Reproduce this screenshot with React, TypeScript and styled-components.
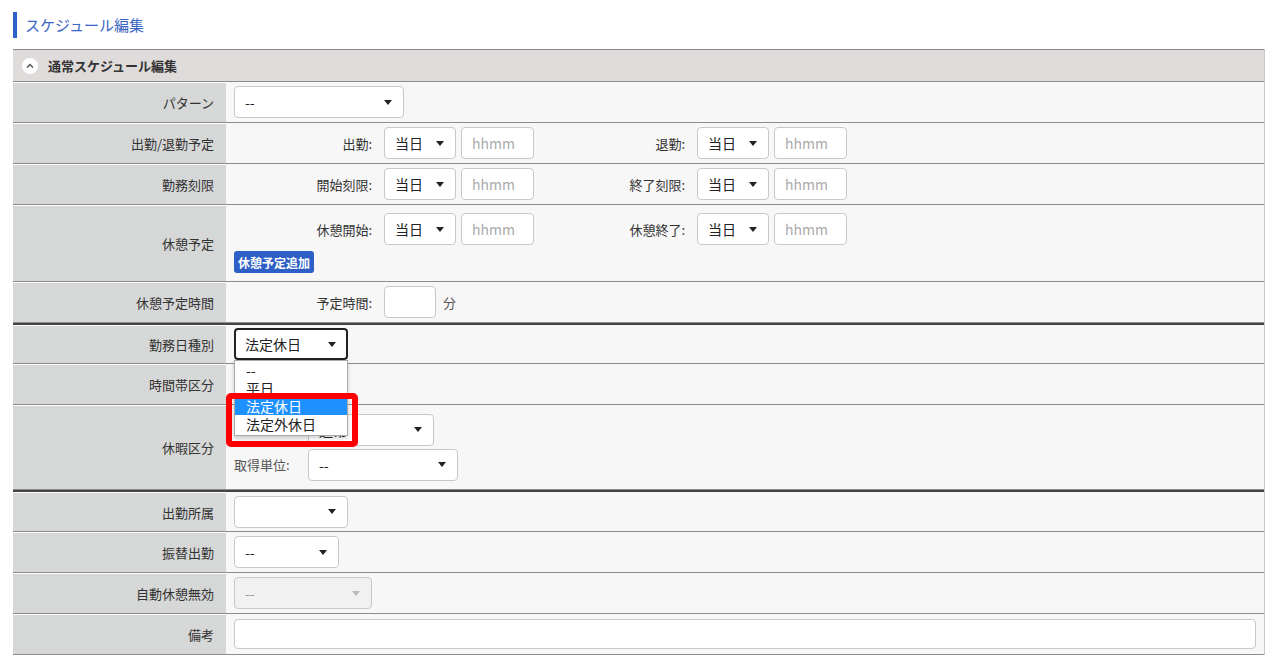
import React from "react";
import styled, { createGlobalStyle } from "styled-components";

const Global = createGlobalStyle`
  body { margin: 0; background: #fff; font-family: "Noto Sans CJK JP", "Noto Sans", sans-serif; font-size: 13px; color: #333; }
  * { box-sizing: border-box; }
`;

const Page = styled.div`
  padding: 12px 15px 16px 13px;
  position: relative;
`;
const Title = styled.h1`
  margin: 0 0 11px;
  border-left: 4px solid #2f62c9;
  padding-left: 8px;
  height: 26px;
  line-height: 26px;
  font-size: 15px;
  font-weight: normal;
  color: #3a66c4;
`;
const Section = styled.div`
  border-right: 1px solid #c8c8c8;
`;
const Header = styled.div`
  display: flex;
  align-items: center;
  gap: 10px;
  height: 33px;
  background: #dedbda;
  border-top: 1px solid #8c8c8c;
  border-bottom: 1px solid #8c8c8c;
  padding-left: 9px;
  font-weight: bold;
  font-size: 13px;
  color: #333;
`;
const Toggle = styled.span`
  width: 16px; height: 16px; border-radius: 50%; background: #fff;
  display: inline-flex; align-items: center; justify-content: center;
`;
const Row = styled.div<{ $h: number; $thick?: boolean }>`
  display: grid;
  grid-template-columns: 213px 1fr;
  height: ${p => p.$h}px;
  border-top: ${p => (p.$thick ? "2px solid #444" : "none")};
  border-bottom: 1px solid #8c8c8c;
`;
const Label = styled.div`
  background: #d6d7d7;
  display: flex; align-items: center; justify-content: flex-end;
  padding-right: 12px;
  color: #333;
  border-top: 1px solid #fff;
`;
const Value = styled.div`
  background: #f7f7f7;
  padding: 0 8px;
  display: flex; flex-direction: column; justify-content: center; gap: 3px;
  position: relative;
`;
const TimeLine = styled.div`
  display: grid;
  grid-template-columns: 150px 72px 78px 163px 72px 78px;
  align-items: center;
`;
const GLabel = styled.span`
  text-align: right; padding-right: 12px;
`;
const Sel = styled.div<{ $w: number; $focus?: boolean; $disabled?: boolean }>`
  width: ${p => p.$w}px; height: 32px; flex-shrink: 0;
  border: ${p => (p.$focus ? "2px solid #222" : "1px solid #c8c8c8")};
  border-radius: 4px;
  background: ${p => (p.$disabled ? "#f1f1f1" : "#fff")};
  color: ${p => (p.$disabled ? "#999" : "#222")};
  display: flex; align-items: center; justify-content: space-between;
  padding: 0 ${p => (p.$focus ? 10 : 11)}px 0 ${p => (p.$focus ? 9 : 10)}px;
  font-size: 14px;
  &::after { content: ""; border-left: 4px solid transparent; border-right: 4px solid transparent;
    border-top: 5px solid ${p => (p.$disabled ? "#bbb" : "#222")}; }
`;
const TimeInput = styled.div<{ $gap?: number }>`
  width: 73px; height: 32px; margin-left: ${p => p.$gap ?? 5}px;
  border: 1px solid #c8c8c8; border-radius: 4px; background: #fff;
  color: #aaa; font-size: 14px; display: flex; align-items: center; padding-left: 10px;
`;
const Btn = styled.button`
  align-self: flex-start;
  background: #2d5fc6; color: #fff; border: none; border-radius: 3px;
  font: bold 12px "Noto Sans CJK JP", sans-serif; height: 22px; padding: 0 4px; margin-top: 3px;
`;
const Inline = styled.div`
  display: flex; align-items: center;
`;
const Small = styled.span<{ $w?: number }>`
  width: ${p => (p.$w ? p.$w + "px" : "auto")}; color: #555;
`;
const Wide = styled.div`
  height: 30px; border: 1px solid #c8c8c8; border-radius: 4px; background: #fff;
`;
const Menu = styled.div`
  position: absolute; left: 8px; top: 35px; width: 114px;
  background: #fff; border: 1px solid #aaa; box-shadow: 0 2px 4px rgba(0,0,0,.2);
  font-size: 14px; line-height: 18px; z-index: 2; padding-bottom: 2px;
`;
const Opt = styled.div<{ $sel?: boolean }>`
  padding-left: 11px;
  background: ${p => (p.$sel ? "#1e90ff" : "transparent")};
  color: ${p => (p.$sel ? "#fff" : "#222")};
`;
const Highlight = styled.div`
  position: absolute; left: 0; top: 68px; width: 132px; height: 54px;
  border: 6px solid #f00; border-radius: 5px; z-index: 3;
`;

const TimeRow = ({ a, b }: { a: string; b: string }) => (
  <TimeLine>
    <GLabel>{a}</GLabel><Sel $w={72}>当日</Sel><TimeInput>hhmm</TimeInput>
    <GLabel>{b}</GLabel><Sel $w={72}>当日</Sel><TimeInput>hhmm</TimeInput>
  </TimeLine>
);

export default function App() {
  return (
    <Page>
      <Global />
      <Title>スケジュール編集</Title>
      <Section>
        <Header>
          <Toggle>
            <svg width="10" height="10" viewBox="0 0 10 10"><path d="M2 6.5 L5 3.5 L8 6.5" stroke="#555" strokeWidth="1.5" fill="none" /></svg>
          </Toggle>
          通常スケジュール編集
        </Header>
        <Row $h={41}><Label>パターン</Label><Value><Sel $w={170}>--</Sel></Value></Row>
        <Row $h={41}><Label>出勤/退勤予定</Label><Value><TimeRow a="出勤:" b="退勤:" /></Value></Row>
        <Row $h={41}><Label>勤務刻限</Label><Value><TimeRow a="開始刻限:" b="終了刻限:" /></Value></Row>
        <Row $h={77}><Label>休憩予定</Label><Value><TimeRow a="休憩開始:" b="休憩終了:" /><Btn>休憩予定追加</Btn></Value></Row>
        <Row $h={41}><Label>休憩予定時間</Label><Value>
          <TimeLine><GLabel>予定時間:</GLabel><Inline><TimeInput $gap={0} /><Small style={{ marginLeft: 7 }}>分</Small></Inline></TimeLine>
        </Value></Row>
        <Row $h={41} $thick><Label>勤務日種別</Label><Value>
          <Sel $w={114} $focus>法定休日</Sel>
          <Menu>
            <Opt>--</Opt><Opt>平日</Opt><Opt $sel>法定休日</Opt><Opt>法定外休日</Opt>
          </Menu>
          <Highlight />
        </Value></Row>
        <Row $h={41}><Label>時間帯区分</Label><Value /></Row>
        <Row $h={85}><Label>休暇区分</Label><Value>
          <Inline><Small $w={74} /><Sel $w={126}>通常</Sel></Inline>
          <Inline><Small $w={74}>取得単位:</Small><Sel $w={150}>--</Sel></Inline>
        </Value></Row>
        <Row $h={42} $thick><Label>出勤所属</Label><Value><Sel $w={114}><span /></Sel></Value></Row>
        <Row $h={41}><Label>振替出勤</Label><Value><Sel $w={105}>--</Sel></Value></Row>
        <Row $h={41}><Label>自動休憩無効</Label><Value><Sel $w={138} $disabled>--</Sel></Value></Row>
        <Row $h={41}><Label>備考</Label><Value><Wide /></Value></Row>
      </Section>
    </Page>
  );
}
